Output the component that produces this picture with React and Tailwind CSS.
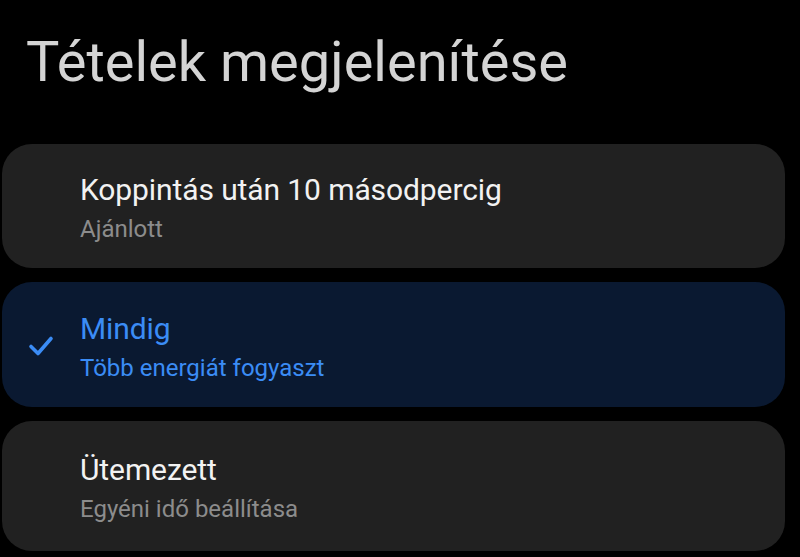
export default function App() {
  const items = [
    { title: "Koppintás után 10 másodpercig", sub: "Ajánlott", selected: false, h: "h-[124px]" },
    { title: "Mindig", sub: "Több energiát fogyaszt", selected: true, h: "h-[125px]" },
    { title: "Ütemezett", sub: "Egyéni idő beállítása", selected: false, h: "h-[130px]" },
  ];

  return (
    <div
      className="w-[800px] h-[557px] bg-black overflow-hidden"
      style={{ fontFamily: "Roboto, 'Noto Sans', sans-serif" }}
    >
      <h1 className="pl-[26px] pt-[29px] text-[56px] leading-[66px] text-[#d4d4d4] font-normal">
        Tételek megjelenítése
      </h1>
      <div className="mt-[49px] ml-[2px] mr-[15px] flex flex-col gap-[14px]">
        {items.map((it) => (
          <div
            key={it.title}
            className={`${it.h} rounded-[30px] flex items-center ${
              it.selected ? "bg-[#0a1931]" : "bg-[#212121]"
            }`}
          >
            <div className="w-[78px] flex justify-center pt-[2px]">
              {it.selected && (
                <svg width="26" height="22" viewBox="0 0 26 22" fill="none">
                  <path
                    d="M3 11.5 L10 18.5 L23 3.5"
                    stroke="#3b8cf5"
                    strokeWidth="3.6"
                    strokeLinecap="round"
                    strokeLinejoin="round"
                  />
                </svg>
              )}
            </div>
            <div className="flex flex-col pt-[8px]">
              <span
                className={`text-[30px] leading-[38px] tracking-[-0.1px] ${
                  it.selected ? "text-[#3b8cf5]" : "text-[#f2f2f2]"
                }`}
              >
                {it.title}
              </span>
              <span
                className={`text-[24px] leading-[40px] ${
                  it.selected ? "text-[#3b8cf5]" : "text-[#8c8c8c]"
                }`}
              >
                {it.sub}
              </span>
            </div>
          </div>
        ))}
      </div>
    </div>
  );
}
